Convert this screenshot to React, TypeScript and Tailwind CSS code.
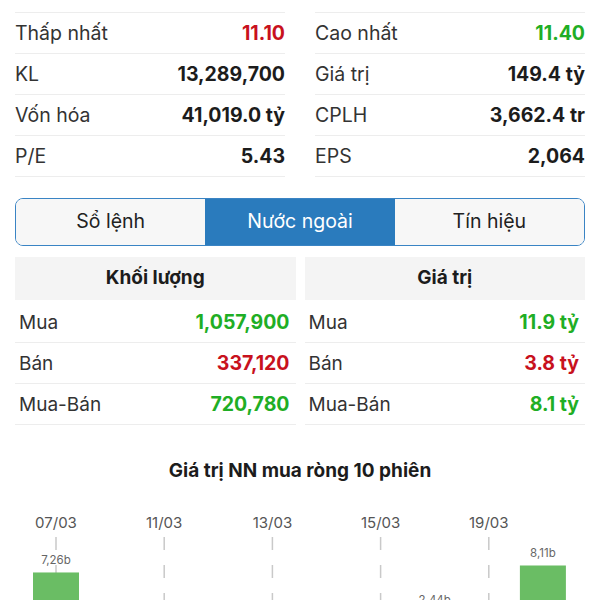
import React from 'react';

type Stat = { label: string; value: string; tone?: 'up' | 'down' };

const leftStats: Stat[] = [
  { label: 'Mở cửa', value: '11.20' },
  { label: 'Thấp nhất', value: '11.10', tone: 'down' },
  { label: 'KL', value: '13,289,700' },
  { label: 'Vốn hóa', value: '41,019.0 tỷ' },
  { label: 'P/E', value: '5.43' },
];

const rightStats: Stat[] = [
  { label: 'Tham chiếu', value: '11.25' },
  { label: 'Cao nhất', value: '11.40', tone: 'up' },
  { label: 'Giá trị', value: '149.4 tỷ' },
  { label: 'CPLH', value: '3,662.4 tr' },
  { label: 'EPS', value: '2,064' },
];

const volumeRows: Stat[] = [
  { label: 'Mua', value: '1,057,900', tone: 'up' },
  { label: 'Bán', value: '337,120', tone: 'down' },
  { label: 'Mua-Bán', value: '720,780', tone: 'up' },
];

const valueRows: Stat[] = [
  { label: 'Mua', value: '11.9 tỷ', tone: 'up' },
  { label: 'Bán', value: '3.8 tỷ', tone: 'down' },
  { label: 'Mua-Bán', value: '8.1 tỷ', tone: 'up' },
];

const sessions = [
  { date: '07/03', v: 7.26 },
  { date: '08/03', v: 1.12 },
  { date: '11/03', v: 0.85 },
  { date: '12/03', v: -1.4 },
  { date: '13/03', v: 0.42 },
  { date: '14/03', v: 1.05 },
  { date: '15/03', v: -0.7 },
  { date: '18/03', v: 2.44 },
  { date: '19/03', v: 1.18 },
  { date: '20/03', v: 8.11 },
];

const toneClass = (tone?: Stat['tone']) =>
  tone === 'up' ? 'text-[#1fae25]' : tone === 'down' ? 'text-[#c8111d]' : 'text-[#1c1c1c]';

function StatColumn({ items }: { items: Stat[] }) {
  return (
    <div className="flex flex-col">
      {items.map((s, i) => (
        <div
          key={s.label}
          className={`flex items-center justify-between h-[41px] pt-[2px] border-b border-[#ededed] ${i === 0 ? 'mt-[-28px]' : ''}`}
        >
          <span className="text-[19.5px] text-[#333]">{s.label}</span>
          <span className={`text-[19.5px] font-bold ${toneClass(s.tone)}`}>{s.value}</span>
        </div>
      ))}
    </div>
  );
}

function FlowTable({ title, rows }: { title: string; rows: Stat[] }) {
  return (
    <div className="flex flex-col">
      <div className="h-[43px] bg-[#f4f4f4] flex items-center justify-center text-[19px] font-bold text-[#1c1c1c]">
        {title}
      </div>
      <div className="mt-[2px]">
        {rows.map((r) => (
          <div key={r.label} className="flex items-center justify-between h-[41px] pt-[2px] border-b border-[#ededed] pl-[4px] pr-[6px]">
            <span className="text-[19px] text-[#333]">{r.label}</span>
            <span className={`text-[19.5px] font-bold ${toneClass(r.tone)}`}>{r.value}</span>
          </div>
        ))}
      </div>
    </div>
  );
}

function NetChart() {
  const baseY = 132;
  const scale = 8.2;
  const cx = (i: number) => 56 + 54.1 * i;
  return (
    <svg width={600} height={140} className="block" style={{ fontFamily: 'Inter, "Noto Sans", sans-serif' }}>
      {sessions.map((s, i) =>
        i % 2 === 0 && i < 9 ? (
          <g key={'d' + s.date}>
            <text x={cx(i)} y={28} textAnchor="middle" fontSize={15} fill="#555">
              {s.date}
            </text>
            <line
              x1={cx(i)}
              x2={cx(i)}
              y1={37}
              y2={140}
              stroke="#c9c9c9"
              strokeWidth={1.5}
              strokeDasharray="13 15"
            />
          </g>
        ) : null
      )}
      {sessions.map((s, i) => {
        const h = Math.abs(s.v) * scale;
        const top = s.v >= 0 ? baseY - h : baseY;
        return (
          <g key={'b' + s.date}>
            <rect x={cx(i) - 23} y={top} width={46} height={h} fill="#6abd64" />
            <text x={cx(i)} y={baseY - (s.v >= 0 ? h : 0) - 8} textAnchor="middle" fontSize={11.5} fill="#666">
              {s.v.toFixed(2).replace('.', ',')}b
            </text>
          </g>
        );
      })}
    </svg>
  );
}

export default function App() {
  const tabs = ['Sổ lệnh', 'Nước ngoài', 'Tín hiệu'];
  return (
    <div
      className="w-[600px] h-[600px] overflow-hidden bg-white"
      style={{ fontFamily: 'Inter, "Noto Sans", sans-serif' }}
    >
      <div className="px-[15px]">
        <div className="grid grid-cols-2 gap-x-[30px]">
          <StatColumn items={leftStats} />
          <StatColumn items={rightStats} />
        </div>

        <div className="mt-[21px] h-[48px] flex rounded-[8px] border-[1.5px] border-[#3a84c4] overflow-hidden">
          {tabs.map((t, i) => (
            <div
              key={t}
              className={`flex-1 flex items-center justify-center text-[19.5px] ${
                i === 1 ? 'bg-[#2a7bbd] text-white' : 'bg-[#f7f7f7] text-[#222]'
              }`}
            >
              {t}
            </div>
          ))}
        </div>

        <div className="mt-[11px] grid grid-cols-2 gap-x-[9px]">
          <FlowTable title="Khối lượng" rows={volumeRows} />
          <FlowTable title="Giá trị" rows={valueRows} />
        </div>

        <div className="mt-[34px] text-center text-[19px] font-bold text-[#1c1c1c] leading-[24px]">
          Giá trị NN mua ròng 10 phiên
        </div>
      </div>
      <div className="mt-[17px]">
        <NetChart />
      </div>
    </div>
  );
}
